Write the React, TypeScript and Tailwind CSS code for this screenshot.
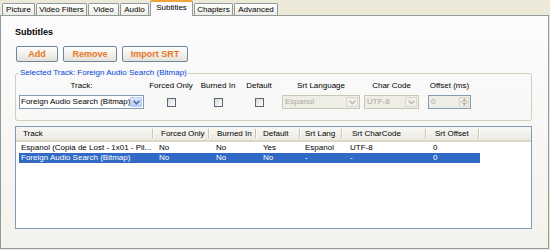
import React from "react";

function Chevron({ color }: { color: string }) {
  return (
    <svg width="7" height="5" viewBox="0 0 7 5">
      <path d="M0.6 0.8 L3.5 3.7 L6.4 0.8" fill="none" stroke={color} strokeWidth="1.4" />
    </svg>
  );
}

function Checkbox() {
  return (
    <div className="w-[9px] h-[9px] border border-[#56697D] bg-gradient-to-br from-[#DCDBD4] to-white" />
  );
}

function DisabledCombo({ text, w }: { text: string; w: string }) {
  return (
    <div className={`${w} h-[14px] border border-[#C9C7BA] bg-[#EEEDE6] flex items-stretch`}>
      <div className="flex-1 overflow-hidden whitespace-nowrap pl-[2px] leading-[12px] text-[#ACA899]">{text}</div>
      <div className="w-[12px] my-[1px] mr-[1px] rounded-[1px] border border-[#DAD8CE] bg-[#F1F0EA] flex items-center justify-center">
        <Chevron color="#BCBAAE" />
      </div>
    </div>
  );
}

const tabs = [
  { label: "Picture", w: "w-[33px]" },
  { label: "Video Filters", w: "w-[51px]" },
  { label: "Video", w: "w-[31px]" },
  { label: "Audio", w: "w-[29px]" },
  { label: "Subtitles", w: "w-[43px]", active: true },
  { label: "Chapters", w: "w-[39px]" },
  { label: "Advanced", w: "w-[44px]" },
];

const cols = [
  { name: "Track", w: "w-[138px]", hp: "pl-[7px]" },
  { name: "Forced Only", w: "w-[56px]", hp: "pl-[7px]" },
  { name: "Burned In", w: "w-[47px]", hp: "pl-[7px]" },
  { name: "Default", w: "w-[44px]", hp: "pl-[6px]" },
  { name: "Srt Lang", w: "w-[42px]", hp: "pl-[4px]" },
  { name: "Srt CharCode", w: "w-[84px]", hp: "pl-[9px]" },
  { name: "Srt Offset", w: "w-[53px]", hp: "pl-[8px]" },
];

const dataCols = [
  { w: "w-[135px]", p: "pl-[2px]" },
  { w: "w-[56px]", p: "pl-[5px]" },
  { w: "w-[47px]", p: "pl-[6px]" },
  { w: "w-[44px]", p: "pl-[6px]" },
  { w: "w-[42px]", p: "pl-[4px]" },
  { w: "w-[84px]", p: "pl-[7px]" },
  { w: "w-[53px]", p: "pl-[6px]" },
];

const rows = [
  { cells: ["Espanol (Copia de Lost - 1x01 - Pil...", "No", "No", "Yes", "Espanol", "UTF-8", "0"], sel: false },
  { cells: ["Foreign Audio Search (Bitmap)", "No", "No", "No", "-", "-", "0"], sel: true },
];

export default function App() {
  return (
    <div className="w-[550px] h-[250px] bg-[#ECE9D8] font-['Liberation_Sans',Arial,sans-serif] text-[8px] text-black overflow-hidden">
      {/* tabs */}
      <div className="flex items-end h-[15px] pl-[2px] gap-[1px]">
        {tabs.map((t) =>
          t.active ? (
            <div
              key={t.label}
              className={`${t.w} h-[16px] -mb-[1px] relative z-10 border-x border-[#919B9C] border-t-2 border-t-[#F0A43A] rounded-t-[2px] bg-[#FCFCFE] flex items-start justify-center pt-[1px] leading-[10px] whitespace-nowrap`}
            >
              {t.label}
            </div>
          ) : (
            <div
              key={t.label}
              className={`${t.w} h-[12px] border-x border-t border-[#919B9C] rounded-t-[2px] bg-gradient-to-b from-white to-[#ECEBE5] flex items-center justify-center leading-[10px] whitespace-nowrap`}
            >
              {t.label}
            </div>
          )
        )}
      </div>

      {/* panel */}
      <div className="w-[549px] h-[234px] border border-[#919B9C] bg-gradient-to-b from-[#FCFCFE] to-[#F3F2EC] pl-[14px] flex flex-col">
        <div className="mt-[11px] h-[10px] leading-[10px] font-bold text-[9px]">Subtitles</div>

        <div className="mt-[9px] flex gap-[5px] ml-[1px]">
          {[
            { t: "Add", w: "w-[42px]" },
            { t: "Remove", w: "w-[54px]" },
            { t: "Import SRT", w: "w-[66px]" },
          ].map((b) => (
            <div
              key={b.t}
              className={`${b.w} h-[16px] border border-[#70849A] rounded-[2px] bg-gradient-to-b from-white to-[#E4E2D9] flex items-center justify-center font-bold text-[9px] text-[#E8761E] leading-[10px]`}
            >
              {b.t}
            </div>
          ))}
        </div>

        <fieldset className="mt-[6px] w-[517px] border border-[#D0D0BF] rounded-[3px] pb-[11px]">
          <legend className="ml-[3px] px-[1px] leading-[10px] h-[10px] text-[#0046D5]">
            Selected Track: Foreign Audio Search (Bitmap)
          </legend>
          <div className="flex mt-[3px]">
            <div className="ml-[3px] w-[125px] flex flex-col items-center">
              <div className="leading-[10px] h-[10px] whitespace-nowrap">Track:</div>
              <div className="mt-[4px] w-[125px] h-[14px] border border-[#7F9DB9] bg-white flex items-stretch">
                <div className="flex-1 overflow-hidden whitespace-nowrap pl-[1px] leading-[12px]">Foreign Audio Search (Bitmap)</div>
                <div className="w-[12px] my-[1px] mr-[1px] rounded-[1px] border border-[#B9CCF5] bg-gradient-to-b from-[#DDE7FD] to-[#B5CAF7] flex items-center justify-center">
                  <Chevron color="#4D6185" />
                </div>
              </div>
            </div>
            <div className="ml-[2px] w-[50px] flex flex-col items-center">
              <div className="leading-[10px] h-[10px] whitespace-nowrap">Forced Only</div>
              <div className="mt-[4px] h-[14px] flex items-center"><Checkbox /></div>
            </div>
            <div className="ml-[4px] w-[36px] flex flex-col items-center">
              <div className="leading-[10px] h-[10px] whitespace-nowrap">Burned In</div>
              <div className="mt-[4px] h-[14px] flex items-center"><Checkbox /></div>
            </div>
            <div className="ml-[6px] w-[34px] flex flex-col items-center">
              <div className="leading-[10px] h-[10px] whitespace-nowrap">Default</div>
              <div className="mt-[4px] h-[14px] flex items-center"><Checkbox /></div>
            </div>
            <div className="ml-[6px] w-[78px] flex flex-col items-center">
              <div className="leading-[10px] h-[10px] whitespace-nowrap">Srt Language</div>
              <div className="mt-[4px]"><DisabledCombo text="Espanol" w="w-[78px]" /></div>
            </div>
            <div className="ml-[4px] w-[55px] flex flex-col items-center">
              <div className="leading-[10px] h-[10px] whitespace-nowrap">Char Code</div>
              <div className="mt-[4px]"><DisabledCombo text="UTF-8" w="w-[55px]" /></div>
            </div>
            <div className="ml-[9px] w-[43px] flex flex-col items-center">
              <div className="leading-[10px] h-[10px] whitespace-nowrap">Offset (ms)</div>
              <div className="mt-[4px] w-[43px] h-[14px] border border-[#7F9DB9] bg-[#EEEDE6] flex items-stretch">
                <div className="flex-1 pl-[2px] leading-[12px] text-[#ACA899]">0</div>
                <div className="w-[10px] my-[1px] mr-[1px] flex flex-col">
                  <div className="flex-1 border border-[#DAD8CE] bg-[#F1F0EA] flex items-center justify-center">
                    <svg width="5" height="3" viewBox="0 0 5 3"><path d="M0 3 L2.5 0 L5 3 Z" fill="#BCBAAE" /></svg>
                  </div>
                  <div className="flex-1 border border-[#DAD8CE] bg-[#F1F0EA] flex items-center justify-center">
                    <svg width="5" height="3" viewBox="0 0 5 3"><path d="M0 0 L2.5 3 L5 0 Z" fill="#BCBAAE" /></svg>
                  </div>
                </div>
              </div>
            </div>
          </div>
        </fieldset>

        {/* list view */}
        <div className="mt-[5px] w-[517px] h-[103px] border border-[#7F9DB9] bg-white flex flex-col">
          <div className="h-[15px] flex bg-gradient-to-b from-[#F8F7F2] to-[#EBEAE3] border-b-2 border-[#DBD7C9]">
            {cols.map((c) => (
              <div key={c.name} className={`${c.w} flex items-center`}>
                <div className={`flex-1 ${c.hp} leading-[10px] whitespace-nowrap overflow-hidden`}>{c.name}</div>
                <div className="w-[1px] h-[9px] bg-[#C7C5B2]" />
                <div className="w-[1px] h-[9px] bg-white" />
              </div>
            ))}
          </div>
          <div className="pt-[1px] flex flex-col">
            {rows.map((r, i) => (
              <div key={i} className="h-[10px] flex pl-[3px]">
                <div className={`flex h-[10px] ${r.sel ? "bg-[#316AC5] text-white" : ""}`}>
                  {r.cells.map((c, j) => (
                    <div
                      key={j}
                      className={`${dataCols[j].w} ${dataCols[j].p} leading-[10px] whitespace-nowrap overflow-hidden`}
                    >
                      {c}
                    </div>
                  ))}
                </div>
              </div>
            ))}
          </div>
        </div>
      </div>
    </div>
  );
}
